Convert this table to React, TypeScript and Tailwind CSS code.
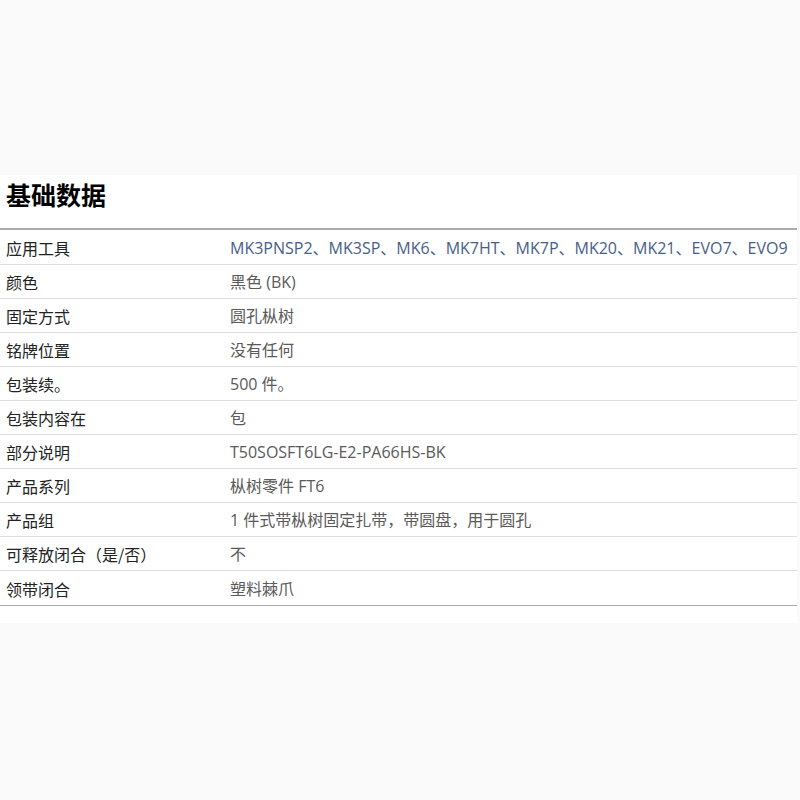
const rows: { label: string; value: string; blue?: boolean }[] = [
  { label: '应用工具', value: 'MK3PNSP2、MK3SP、MK6、MK7HT、MK7P、MK20、MK21、EVO7、EVO9', blue: true },
  { label: '颜色', value: '黑色 (BK)' },
  { label: '固定方式', value: '圆孔枞树' },
  { label: '铭牌位置', value: '没有任何' },
  { label: '包装续。', value: '500 件。' },
  { label: '包装内容在', value: '包' },
  { label: '部分说明', value: 'T50SOSFT6LG-E2-PA66HS-BK' },
  { label: '产品系列', value: '枞树零件 FT6' },
  { label: '产品组', value: '1 件式带枞树固定扎带，带圆盘，用于圆孔' },
  { label: '可释放闭合（是/否）', value: '不' },
  { label: '领带闭合', value: '塑料棘爪' },
]

export default function App() {
  return (
    <div className="h-[800px] w-[800px] bg-[#fafafa] pt-[175px]">
      <div className="w-[797px] bg-white pb-[17px]">
        {/* 标题 */}
        <h2
          className="h-[53px] pl-[6px] text-[25px] font-bold leading-[38px] text-black"
          style={{ fontFamily: '"Noto Sans CJK SC", sans-serif' }}
        >
          基础数据
        </h2>

        {/* 数据表 */}
        <div className="border-t-2 border-b border-[#aaaaaa]">
          {rows.map((r, i) => (
            <div
              key={r.label}
              className={`flex items-center pt-[1px] text-[16px] ${
                i === 0 ? 'h-[35px]' : 'h-[34px]'
              } ${i < rows.length - 1 ? 'border-b border-[#dddddd]' : ''}`}
            >
              <div
                className="w-[230px] pl-[6px] text-[#222222]"
                style={{ fontFamily: '"Noto Sans CJK SC", sans-serif' }}
              >
                {r.label}
              </div>
              <div
                className={r.blue ? 'text-[#46608a]' : 'text-[#5a5a5a]'}
                style={{ fontFamily: '"Open Sans", "Noto Sans CJK SC", sans-serif' }}
              >
                {r.value}
              </div>
            </div>
          ))}
        </div>
      </div>
    </div>
  )
}
